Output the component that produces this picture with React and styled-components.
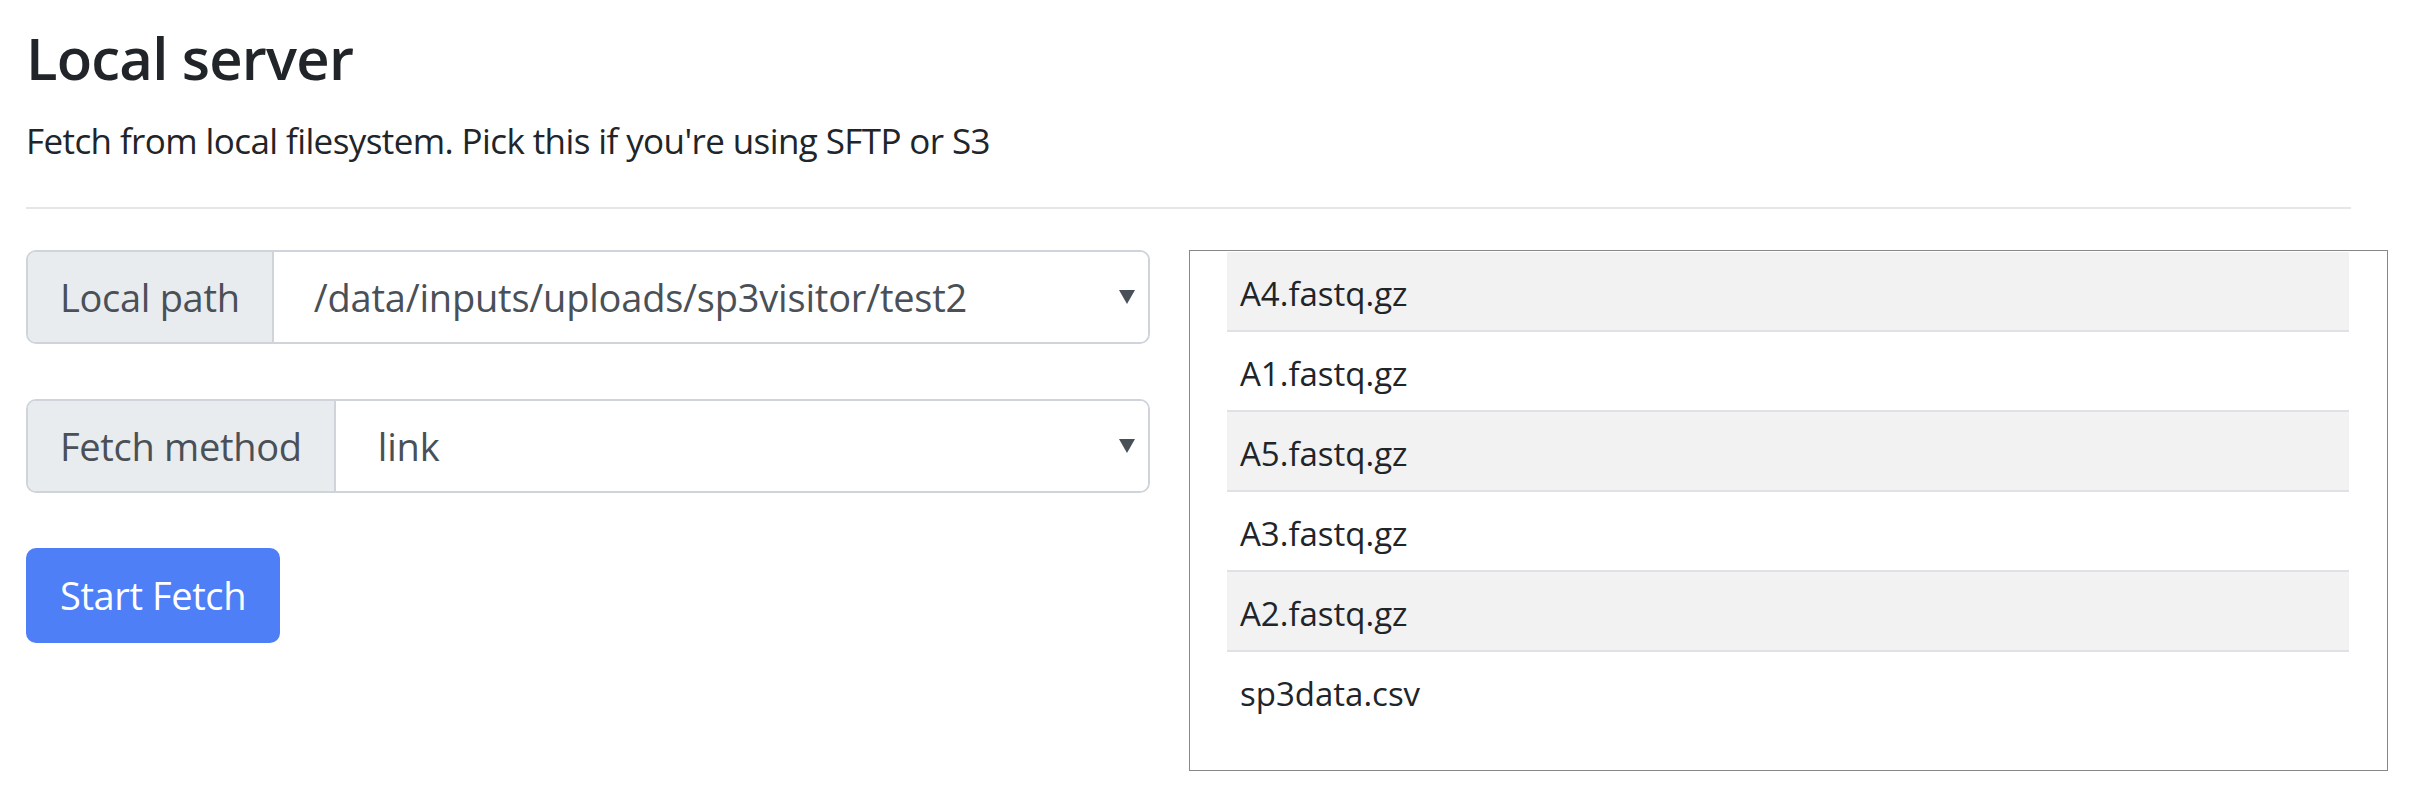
import React from "react";
import styled, { createGlobalStyle } from "styled-components";

const GlobalStyle = createGlobalStyle`
  html, body {
    margin: 0;
    padding: 0;
    background: #ffffff;
  }
  body {
    font-family: "Open Sans", "Noto Sans", sans-serif;
    color: #212529;
  }
  * { box-sizing: border-box; }
`;

const Page = styled.div`
  padding: 22px 61px 0 26px;
  width: 2412px;
`;

const Title = styled.h2`
  margin: 0;
  font-size: 58px;
  font-weight: 600;
  letter-spacing: -0.8px;
  line-height: 72px;
  color: #212529;
`;

const Subtitle = styled.p`
  margin: 20px 0 0;
  font-size: 35px;
  letter-spacing: -0.6px;
  line-height: 54px;
  font-weight: 400;
  color: #212529;
`;

const Rule = styled.hr`
  margin: 39px 0 41px;
  border: 0;
  border-top: 2px solid #e6e6e6;
  height: 0;
`;

const Row = styled.div`
  display: grid;
  grid-template-columns: 1124px 1199px;
  column-gap: 39px;
  align-items: start;
`;

const FormColumn = styled.div`
  display: flex;
  flex-direction: column;
  align-items: flex-start;
  gap: 55px;
`;

const InputGroup = styled.div`
  display: flex;
  width: 100%;
  height: 94px;
  border: 2px solid #ced4da;
  border-radius: 10px;
  overflow: hidden;
`;

const Addon = styled.span`
  display: flex;
  align-items: center;
  padding: 0 32px;
  background: #e9ecef;
  border-right: 2px solid #ced4da;
  font-size: 38px;
  letter-spacing: -0.3px;
  line-height: 1.5;
  color: #495057;
  white-space: nowrap;
`;

const SelectBox = styled.div`
  flex: 1;
  display: flex;
  align-items: center;
  justify-content: space-between;
  padding: 0 13px 0 ${(p) => p.$indent}px;
  background: #ffffff;
  font-size: 38px;
  letter-spacing: -0.2px;
  line-height: 1.5;
  color: #495057;
  cursor: pointer;
`;

const Caret = styled.svg`
  width: 16px;
  height: 14px;
  flex: none;
  fill: #495057;
`;

const PrimaryButton = styled.button`
  height: 95px;
  padding: 0 34px;
  border: 0;
  border-radius: 10px;
  background: #4e7ff6;
  color: #ffffff;
  font-family: inherit;
  font-size: 38px;
  letter-spacing: -0.4px;
  line-height: 1.5;
  cursor: pointer;
`;

const FileBox = styled.div`
  height: 521px;
  border: 1px solid #888888;
  padding: 1px 38px 0 37px;
  overflow: hidden;
`;

const FileList = styled.ul`
  list-style: none;
  margin: 0;
  padding: 0;
`;

const FileItem = styled.li`
  height: 80px;
  padding: 18px 13px 0;
  font-size: 33px;
  line-height: 48px;
  color: #212529;
  background: ${(p) => (p.$striped ? "#f2f2f2" : "#ffffff")};
  border-bottom: ${(p) => (p.$last ? "0" : "2px solid #dee2e6")};
`;

const files = [
  "A4.fastq.gz",
  "A1.fastq.gz",
  "A5.fastq.gz",
  "A3.fastq.gz",
  "A2.fastq.gz",
  "sp3data.csv",
];

function Select({ value, indent }) {
  return (
    <SelectBox $indent={indent}>
      <span>{value}</span>
      <Caret viewBox="0 0 16 14" aria-hidden="true">
        <polygon points="0,0 16,0 8,14" />
      </Caret>
    </SelectBox>
  );
}

export default function App() {
  return (
    <>
      <GlobalStyle />
      <Page>
        <Title>Local server</Title>
        <Subtitle>Fetch from local filesystem. Pick this if you're using SFTP or S3</Subtitle>
        <Rule />
        <Row>
          <FormColumn>
            <InputGroup>
              <Addon>Local path</Addon>
              <Select value="/data/inputs/uploads/sp3visitor/test2" indent={40} />
            </InputGroup>
            <InputGroup>
              <Addon>Fetch method</Addon>
              <Select value="link" indent={42} />
            </InputGroup>
            <PrimaryButton>Start Fetch</PrimaryButton>
          </FormColumn>
          <FileBox>
            <FileList>
              {files.map((f, i) => (
                <FileItem key={f} $striped={i % 2 === 0} $last={i === files.length - 1}>
                  {f}
                </FileItem>
              ))}
            </FileList>
          </FileBox>
        </Row>
      </Page>
    </>
  );
}
